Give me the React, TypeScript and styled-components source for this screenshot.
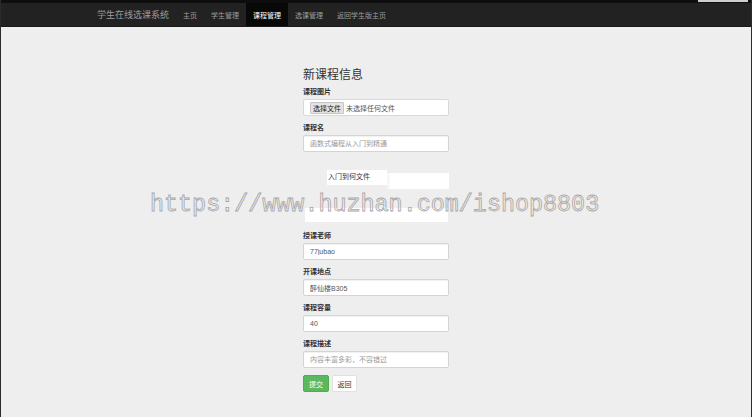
import React from "react";
import styled, { createGlobalStyle } from "styled-components";

const Global = createGlobalStyle`
  html, body { margin: 0; padding: 0; background: #eeeeee; }
  body {
    font-family: "Liberation Sans", "Noto Sans CJK SC", sans-serif;
    color: #333;
  }
  * { box-sizing: border-box; }
`;

const Page = styled.div`
  position: relative;
  min-height: 417px;
  border-left: 1px solid #2b2b2b;
  border-right: 1px solid #2b2b2b;
  background: #eeeeee;
  overflow: hidden;
`;

const TopStrip = styled.div`
  height: 3px;
  background: #0e0e0e;
  display: flex;
  justify-content: flex-end;
`;

const StripTab = styled.div`
  width: 50px;
  height: 2px;
  margin-right: 3px;
  background: #cfcfcf;
`;

const Navbar = styled.nav`
  height: 24px;
  background: #222222;
  border-bottom: 1px solid #1a1a1a;
`;

const NavInner = styled.div`
  width: 570px;
  height: 100%;
  margin: 0 auto;
  display: flex;
  align-items: stretch;
`;

const Brand = styled.span`
  display: flex;
  align-items: center;
  padding: 0 7px 0 6px;
  font-size: 9px;
  color: #9d9d9d;
  white-space: nowrap;
`;

const NavLink = styled.a<{ $active?: boolean }>`
  display: flex;
  align-items: center;
  padding: 0 7px;
  font-size: 7px;
  white-space: nowrap;
  color: ${(p) => (p.$active ? "#ffffff" : "#9d9d9d")};
  background: ${(p) => (p.$active ? "#080808" : "transparent")};
  text-decoration: none;
`;

const Main = styled.main`
  width: 146px;
  margin: 0 auto;
  padding-top: 41px;
  display: flex;
  flex-direction: column;
`;

const Title = styled.h3`
  margin: 0 0 5px;
  font-size: 12px;
  line-height: 14px;
  font-weight: 400;
  color: #333;
`;

const Group = styled.div`
  display: flex;
  flex-direction: column;
  margin-bottom: 7px;
`;

const Label = styled.label`
  font-size: 7px;
  line-height: 10px;
  font-weight: 700;
  margin-bottom: 2px;
  color: #333;
`;

const Field = styled.input`
  display: block;
  width: 100%;
  height: 17px;
  padding: 0 6px;
  font-family: inherit;
  font-size: 7px;
  color: #555;
  -webkit-text-fill-color: #555;
  background: #fff;
  border: 1px solid #d4d4d4;
  border-radius: 2px;
  box-shadow: inset 0 1px 1px rgba(0, 0, 0, 0.06);
  outline: none;
  &::placeholder {
    color: #9a9a9a;
    -webkit-text-fill-color: #9a9a9a;
  }
`;

const FileBox = styled.div`
  height: 17px;
  display: flex;
  align-items: center;
  gap: 2px;
  padding: 0 6px;
  background: #fff;
  border: 1px solid #d8d8d8;
  border-radius: 2px;
  font-size: 7px;
  color: #555;
`;

const FileButton = styled.span`
  height: 12px;
  padding: 0 2px;
  display: flex;
  align-items: center;
  background: #e4e4e4;
  border: 1px solid #c4c4c4;
  border-radius: 1px;
  color: #222;
`;

/* covered rows: only loose white scraps of the fields show through */
const ScrapRow = styled.div`
  height: 36px;
  display: flex;
  align-items: flex-start;
`;

const ScrapTag = styled.span`
  margin: 11px 0 0 24px;
  width: 60px;
  height: 15px;
  padding: 2px 0 0 1px;
  background: #fff;
  font-size: 7px;
  line-height: 10px;
  color: #333;
  white-space: nowrap;
`;

const ScrapBox = styled.span`
  margin-top: 14px;
  width: 62px;
  height: 16px;
  background: linear-gradient(to right, #f4f4f4 0, #fff 4px, #fff 100%);
`;

const ScrapStrip = styled.span`
  margin: 13px 0 0 2px;
  width: 143px;
  height: 14px;
  background: #fff;
`;

const Actions = styled.div`
  display: flex;
  gap: 3px;
`;

const Button = styled.button<{ $primary?: boolean }>`
  height: 17px;
  width: ${(p) => (p.$primary ? "26px" : "25px")};
  padding: 0;
  font-family: inherit;
  font-size: 7px;
  border-radius: 2px;
  border: 1px solid ${(p) => (p.$primary ? "#4cae4c" : "#e0e0e0")};
  background: ${(p) => (p.$primary ? "#5cb85c" : "#ffffff")};
  color: ${(p) => (p.$primary ? "#ffffff" : "#333")};
`;

const Watermark = styled.div`
  position: absolute;
  left: 149px;
  top: 194px;
  font-family: "Liberation Mono", monospace;
  font-size: 23.4px;
  line-height: 1;
  color: transparent;
  -webkit-text-stroke: 0.8px #a6a6a6;
  white-space: nowrap;
  pointer-events: none;
`;

const fields = [
  { label: "授课老师", value: "77jubao" },
  { label: "开课地点", value: "醉仙楼B305" },
  { label: "课程容量", value: "40" },
];

export default function App() {
  return (
    <>
      <Global />
      <Page>
        <TopStrip>
          <StripTab />
        </TopStrip>
        <Navbar>
          <NavInner>
            <Brand>学生在线选课系统</Brand>
            <NavLink href="#">主页</NavLink>
            <NavLink href="#">学生管理</NavLink>
            <NavLink href="#" $active>
              课程管理
            </NavLink>
            <NavLink href="#">选课管理</NavLink>
            <NavLink href="#">返回学生版主页</NavLink>
          </NavInner>
        </Navbar>
        <Main>
          <Title>新课程信息</Title>
          <Group>
            <Label>课程图片</Label>
            <FileBox>
              <FileButton>选择文件</FileButton>
              <span>未选择任何文件</span>
            </FileBox>
          </Group>
          <Group>
            <Label>课程名</Label>
            <Field readOnly placeholder="函数式编程从入门到精通" />
          </Group>
          <ScrapRow>
            <ScrapTag>入门到何文件</ScrapTag>
            <ScrapBox />
          </ScrapRow>
          <ScrapRow>
            <ScrapStrip />
          </ScrapRow>
          {fields.map((f) => (
            <Group key={f.label}>
              <Label>{f.label}</Label>
              <Field readOnly defaultValue={f.value} />
            </Group>
          ))}
          <Group>
            <Label>课程描述</Label>
            <Field readOnly placeholder="内容丰富多彩，不容错过" />
          </Group>
          <Actions>
            <Button $primary>提交</Button>
            <Button>返回</Button>
          </Actions>
        </Main>
        <Watermark>https://www.huzhan.com/ishop8803</Watermark>
      </Page>
    </>
  );
}
